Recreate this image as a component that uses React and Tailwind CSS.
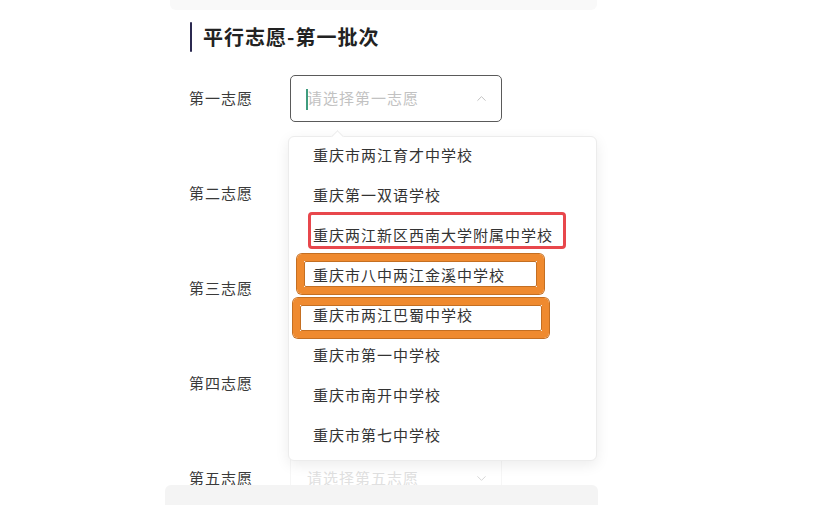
import React from "react";
import { ChevronUp, ChevronDown } from "lucide-react";

const font = { fontFamily: '"Noto Sans CJK SC", "Noto Sans", sans-serif' };

const items = [
  "重庆市两江育才中学校",
  "重庆第一双语学校",
  "重庆两江新区西南大学附属中学校",
  "重庆市八中两江金溪中学校",
  "重庆市两江巴蜀中学校",
  "重庆市第一中学校",
  "重庆市南开中学校",
  "重庆市第七中学校",
];

const rows = [
  { label: "第一志愿", ph: "请选择第一志愿", active: true },
  { label: "第二志愿", ph: "" },
  { label: "第三志愿", ph: "" },
  { label: "第四志愿", ph: "" },
  { label: "第五志愿", ph: "请选择第五志愿", faded: true },
];

function Row({ label, ph, active, faded }) {
  return (
    <div className="flex h-[47px] items-center">
      <div className="w-[101px] text-[15px] tracking-[1px] text-[#3a3a3a]">{label}</div>
      <div
        className={
          active
            ? "relative flex h-[47px] w-[212px] items-center rounded-[5px] border-[1.5px] border-[#5a5a5a] pl-[16px] pr-[12px]"
            : "relative flex h-[47px] w-[212px] items-center rounded-[5px] border border-[#f6f6f6] pl-[16px] pr-[12px]"
        }
      >
        {active && <div className="absolute left-[15px] top-[13px] h-[21px] w-[2px] bg-[#3f9c7e]" />}
        <span className={faded ? "flex-1 text-[15px] tracking-[1px] text-[#e0e0e0]" : "flex-1 text-[15px] tracking-[1px] text-[#c2c2c2]"}>
          {ph}
        </span>
        {active ? (
          <ChevronUp size={15} strokeWidth={1.5} className="text-[#bdbdbd]" />
        ) : (
          <ChevronDown size={15} strokeWidth={1.5} className="text-[#d2d2d2]" />
        )}
      </div>
    </div>
  );
}

export default function App() {
  return (
    <div className="relative h-[505px] w-[823px] overflow-hidden bg-white" style={font}>
      <div className="ml-[167px] w-[433px]">
        <div className="mx-[3px] h-[10px] rounded-b-md bg-[#f9f9f9]" />
        <div className="ml-[23px] mt-[12px] flex h-[30px] items-center">
          <div className="h-[30px] w-[2px] rounded bg-[#2b2950]" />
          <div className="ml-[11px] text-[20px] font-bold tracking-[1px] text-[#222]">平行志愿-第一批次</div>
        </div>
        <div className="ml-[22px] mt-[23px] flex flex-col gap-[48px]">
          {rows.map((r) => (
            <Row key={r.label} {...r} />
          ))}
        </div>
      </div>

      {/* dropdown */}
      <div className="absolute left-[288px] top-[136px] h-[325px] w-[309px] rounded-md border border-[#ececec] bg-white shadow-[0_4px_14px_rgba(0,0,0,0.08)]">
        <div className="absolute left-[44px] top-[-5px] h-[9px] w-[9px] rotate-45 border-l border-t border-[#ececec] bg-white" />
        <div className="-mt-[2px]">
          {items.map((t) => (
            <div key={t} className="flex h-[40px] items-center pl-[24px] text-[15px] tracking-[1px] text-[#333]">
              {t}
            </div>
          ))}
        </div>
      </div>

      {/* annotation boxes */}
      <div className="absolute left-[308px] top-[212px] h-[37px] w-[258px] rounded-[4px] border-[3px] border-[#e8474c]" />
      <div className="absolute left-[297px] top-[254px] h-[40px] w-[247px] rounded-[5px] border-[7px] border-[#ef8a2f] ring-1 ring-[#c46f22]">
        <div className="absolute inset-0 rounded-[2px] border border-[#c46f22]" />
      </div>
      <div className="absolute left-[293px] top-[298px] h-[40px] w-[256px] rounded-[5px] border-[7px] border-[#ef8a2f] ring-1 ring-[#c46f22]">
        <div className="absolute inset-0 rounded-[2px] border border-[#c46f22]" />
      </div>

      {/* bottom bar */}
      <div className="absolute left-[165px] top-[485px] h-[20px] w-[433px] rounded-t-md bg-[#f4f4f4]" />
    </div>
  );
}
